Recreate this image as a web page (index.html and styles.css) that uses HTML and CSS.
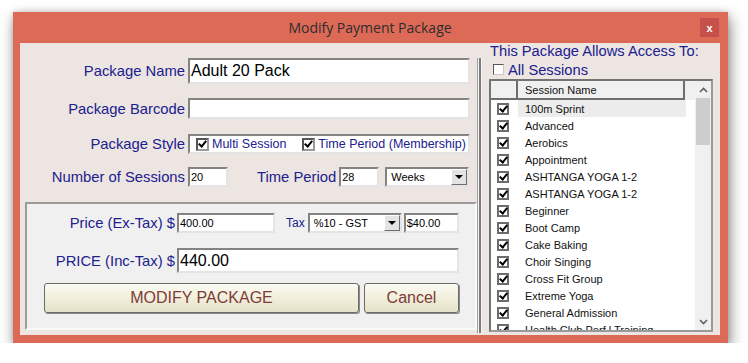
FILE: index.html
```html
<!DOCTYPE html>
<html>
<head>
<meta charset="utf-8">
<title>Modify Payment Package</title>
<link rel="stylesheet" href="styles.css">
</head>
<body>
<div class="win">
  <div class="titlebar">
    <span></span>
    <span class="title">Modify Payment Package</span>
    <span class="close">x</span>
  </div>
  <div class="client">
    <div class="left">
      <div class="frow r-name">
        <span class="lbl">Package Name</span>
        <div class="inp big w-full">Adult 20 Pack</div>
      </div>
      <div class="frow r-barcode">
        <span class="lbl">Package Barcode</span>
        <div class="inp w-full"></div>
      </div>
      <div class="frow r-style">
        <span class="lbl">Package Style</span>
        <div class="inp stylebox w-full">
          <span class="chk on"></span><span class="chklbl">Multi Session</span>
          <span class="chk on second"></span><span class="chklbl">Time Period (Membership)</span>
        </div>
      </div>
      <div class="frow r-num">
        <span class="lbl">Number of Sessions</span>
        <div class="inp w40">20</div>
        <span class="lbl2">Time Period</span>
        <div class="inp w40">28</div>
        <div class="sel weeks"><span class="seltxt">Weeks</span><span class="drop"><span class="tri"></span></span></div>
      </div>
      <div class="pricebox">
        <div class="prow pa">
          <span class="plbl">Price (Ex-Tax) $</span>
          <div class="inp exp">400.00</div>
          <span class="tax">Tax</span>
          <div class="sel taxsel"><span class="seltxt">%10 - GST</span><span class="drop"><span class="tri"></span></span></div>
          <div class="inp taxamt">$40.00</div>
        </div>
        <div class="prow pb">
          <span class="plbl">PRICE (Inc-Tax) $</span>
          <div class="inp big incp">440.00</div>
        </div>
        <div class="btns">
          <div class="btn modify">MODIFY PACKAGE</div>
          <div class="btn cancel">Cancel</div>
        </div>
      </div>
    </div>
    <div class="sep"></div>
    <div class="right">
      <div class="rhead">This Package Allows Access To:</div>
      <div class="allrow"><span class="chk2"></span><span>All Sessions</span></div>
      <div class="grid">
        <div class="gmain">
          <div class="ghead"><span class="hc hc1"></span><span class="hc hc2">Session Name</span><span class="hc hc3"></span></div>
          <div class="grow hl"><span class="c1"><span class="gchk"></span></span><span class="c2">100m Sprint</span></div>
          <div class="grow"><span class="c1"><span class="gchk"></span></span><span class="c2">Advanced</span></div>
          <div class="grow"><span class="c1"><span class="gchk"></span></span><span class="c2">Aerobics</span></div>
          <div class="grow"><span class="c1"><span class="gchk"></span></span><span class="c2">Appointment</span></div>
          <div class="grow"><span class="c1"><span class="gchk"></span></span><span class="c2">ASHTANGA YOGA 1-2</span></div>
          <div class="grow"><span class="c1"><span class="gchk"></span></span><span class="c2">ASHTANGA YOGA 1-2</span></div>
          <div class="grow"><span class="c1"><span class="gchk"></span></span><span class="c2">Beginner</span></div>
          <div class="grow"><span class="c1"><span class="gchk"></span></span><span class="c2">Boot Camp</span></div>
          <div class="grow"><span class="c1"><span class="gchk"></span></span><span class="c2">Cake Baking</span></div>
          <div class="grow"><span class="c1"><span class="gchk"></span></span><span class="c2">Choir Singing</span></div>
          <div class="grow"><span class="c1"><span class="gchk"></span></span><span class="c2">Cross Fit Group</span></div>
          <div class="grow"><span class="c1"><span class="gchk"></span></span><span class="c2">Extreme Yoga</span></div>
          <div class="grow"><span class="c1"><span class="gchk"></span></span><span class="c2">General Admission</span></div>
          <div class="grow"><span class="c1"><span class="gchk"></span></span><span class="c2">Health Club Perf l Training</span></div>
        </div>
        <div class="vscroll">
          <span class="sbtn"><svg width="9" height="6" viewBox="0 0 9 6"><path d="M1 5 L4.5 1.5 L8 5" fill="none" stroke="#5f5f5f" stroke-width="1.6"/></svg></span>
          <span class="thumb"></span>
          <span class="track"></span>
          <span class="sbtn"><svg width="9" height="6" viewBox="0 0 9 6"><path d="M1 1 L4.5 4.5 L8 1" fill="none" stroke="#5f5f5f" stroke-width="1.6"/></svg></span>
        </div>
      </div>
    </div>
  </div>
</div>
</body>
</html>
```
FILE: styles.css
```css
html, body {
  margin: 0;
  background: #ffffff;
  font-family: "Liberation Sans", Arial, sans-serif;
}

.win {
  margin: 12px 0 0 13px;
  width: 715px;
  height: 331px;
  box-sizing: border-box;
  background: #dd6a57;
  padding: 0 8px 8px 7px;
  display: flex;
  flex-direction: column;
  box-shadow: 2px 6px 14px rgba(0, 0, 0, 0.45), 0 0 6px rgba(0, 0, 0, 0.15);
}

.titlebar {
  height: 31px;
  flex: none;
  display: grid;
  grid-template-columns: 1fr auto 1fr;
  align-items: center;
}

.title {
  font-family: "Open Sans", "Noto Sans", sans-serif;
  font-size: 14px;
  color: #2d2d2d;
}

.close {
  justify-self: end;
  margin-right: 1px;
  width: 19px;
  height: 19px;
  background: #c6504b;
  color: #ffffff;
  font-weight: bold;
  font-size: 11px;
  display: flex;
  align-items: center;
  justify-content: center;
}

.client {
  flex: 1;
  background: #ece5e2;
  display: flex;
}

.left {
  width: 457px;
  flex: none;
  display: flex;
  flex-direction: column;
}

.frow {
  display: flex;
  align-items: center;
}

.lbl {
  width: 165px;
  flex: none;
  text-align: right;
  margin-right: 3px;
  font-size: 14.8px;
  color: #20208f;
  white-space: nowrap;
}

.lbl2 {
  margin-left: 29px;
  margin-right: 3px;
  font-size: 14.8px;
  color: #20208f;
  white-space: nowrap;
}

.r-name { margin-top: 15px; height: 26px; }
.r-barcode { margin-top: 14px; height: 21px; }
.r-style { margin-top: 15px; height: 20px; }
.r-num { margin-top: 13px; height: 20px; }

.inp {
  box-sizing: border-box;
  height: 100%;
  background: #ffffff;
  border: 2px solid;
  border-color: #838383 #e4e4e4 #e4e4e4 #838383;
  font-size: 11px;
  color: #000000;
  display: flex;
  align-items: center;
  padding-left: 1px;
  white-space: nowrap;
}

.big { font-size: 16px; }
.w-full { width: 282px; }
.w40 { width: 40px; }

.stylebox {
  font-size: 12.5px;
  color: #20208f;
}

.chk {
  width: 13px;
  height: 13px;
  box-sizing: border-box;
  border: 2px solid;
  border-color: #555555 #9a9a9a #9a9a9a #555555;
  background: #ffffff;
  margin-left: 5px;
  position: relative;
  flex: none;
}

.chk.second { margin-left: 16px; }

.chklbl { margin-left: 3px; }

.chk.on::after,
.gchk::after {
  content: "";
  position: absolute;
  left: 2px;
  top: -1px;
  width: 3px;
  height: 6px;
  border: solid #000000;
  border-width: 0 2px 2px 0;
  transform: rotate(40deg);
}

.sel {
  box-sizing: border-box;
  height: 20px;
  display: flex;
  background: #ffffff;
  border: 2px solid;
  border-color: #838383 #e4e4e4 #e4e4e4 #838383;
  font-size: 11px;
  color: #000000;
}

.weeks { width: 84px; margin-left: 6px; }

.seltxt {
  flex: 1;
  padding-left: 4px;
  display: flex;
  align-items: center;
}

.drop {
  width: 16px;
  box-sizing: border-box;
  background: #e3e3e3;
  border: 1px solid;
  border-color: #ffffff #6f6f6f #6f6f6f #ffffff;
  display: flex;
  align-items: center;
  justify-content: center;
}

.tri {
  width: 0;
  height: 0;
  border-left: 4px solid transparent;
  border-right: 4px solid transparent;
  border-top: 4px solid #000000;
}

.pricebox {
  margin: 15px 0 0 5px;
  width: 452px;
  height: 128px;
  box-sizing: border-box;
  border: 2px solid;
  border-color: #9b9b9b #fafafa #fafafa #9b9b9b;
  background: #f0f0f0;
  padding-top: 9px;
  display: flex;
  flex-direction: column;
}

.prow {
  display: flex;
  align-items: center;
}

.plbl {
  width: 148px;
  flex: none;
  text-align: right;
  margin-right: 2px;
  font-size: 14.8px;
  color: #20208f;
  white-space: nowrap;
}

.pa { height: 20px; }
.pb { height: 25px; margin-top: 15px; }

.exp { width: 98px; }

.tax {
  margin-left: 11px;
  margin-right: 3px;
  font-size: 12px;
  color: #20208f;
}

.taxsel { width: 94px; }
.taxamt { width: 55px; margin-left: 2px; }
.incp { width: 282px; }

.btns {
  margin-top: 10px;
  margin-left: 17px;
  display: flex;
  gap: 5px;
  height: 30px;
}

.btn {
  box-sizing: border-box;
  height: 30px;
  border: 1px solid #6c6c6c;
  border-radius: 3px;
  background: linear-gradient(#fbfaf2, #f1efdc 50%, #e5e2c8);
  box-shadow: 1px 1px 0 #8a8a8a;
  display: flex;
  align-items: center;
  justify-content: center;
  font-size: 16px;
  color: #7d3c38;
}

.modify { width: 315px; }
.cancel { width: 95px; }

.sep {
  width: 5px;
  flex: none;
  margin-top: 15px;
  height: 275px;
  background: linear-gradient(to right, #a0a0a0 0 1px, #f5f5f5 1px 2px, #7c7c7c 2px 4px, #f5f5f5 4px 5px);
}

.right {
  width: 238px;
  flex: none;
  box-sizing: border-box;
  padding-left: 7px;
  display: flex;
  flex-direction: column;
}

.rhead {
  height: 18px;
  padding-left: 1px;
  font-size: 14.7px;
  line-height: 16px;
  color: #20208f;
  white-space: nowrap;
}

.allrow {
  height: 17px;
  display: flex;
  align-items: center;
  padding-left: 4px;
  font-size: 14.7px;
  color: #20208f;
}

.chk2 {
  width: 11px;
  height: 11px;
  box-sizing: border-box;
  border: 1px solid;
  border-color: #555555 #c8c8c8 #c8c8c8 #555555;
  background: #ffffff;
  margin-right: 4px;
}

.grid {
  margin-top: 1px;
  width: 224px;
  height: 253px;
  box-sizing: border-box;
  border: 2px solid;
  border-color: #747474 #9a9a9a #9a9a9a #747474;
  display: flex;
  background: #ffffff;
  overflow: hidden;
}

.gmain {
  width: 204px;
  flex: none;
  overflow: hidden;
}

.ghead {
  display: flex;
  height: 19px;
  background: #f0f0f0;
}

.hc {
  box-sizing: border-box;
  height: 19px;
}

.hc1 {
  width: 27px;
  border-right: 2px solid #6e6e6e;
  border-bottom: 2px solid #6e6e6e;
}

.hc2 {
  width: 167px;
  border-right: 2px solid #6e6e6e;
  border-bottom: 2px solid #6e6e6e;
  padding-left: 7px;
  font-size: 11px;
  color: #111111;
  display: flex;
  align-items: center;
}

.hc3 { width: 10px; }

.grow {
  display: flex;
  height: 17px;
}

.c1 {
  width: 27px;
  flex: none;
  box-sizing: border-box;
  padding-left: 6px;
  display: flex;
  align-items: center;
}

.c2 {
  width: 168px;
  flex: none;
  box-sizing: border-box;
  padding-left: 7px;
  font-size: 11px;
  color: #111111;
  display: flex;
  align-items: center;
  white-space: nowrap;
}

.grow.hl .c2 { background: #ececec; }

.gchk {
  width: 12px;
  height: 12px;
  box-sizing: border-box;
  border: 2px solid #6c6c6c;
  background: #ffffff;
  position: relative;
}

.vscroll {
  width: 16px;
  flex: none;
  display: flex;
  flex-direction: column;
  background: #f0f0f0;
}

.sbtn {
  height: 17px;
  flex: none;
  display: flex;
  align-items: center;
  justify-content: center;
}

.thumb {
  height: 47px;
  flex: none;
  margin: 0 1px;
  background: #cdcdcd;
}

.track { flex: 1; }
```
